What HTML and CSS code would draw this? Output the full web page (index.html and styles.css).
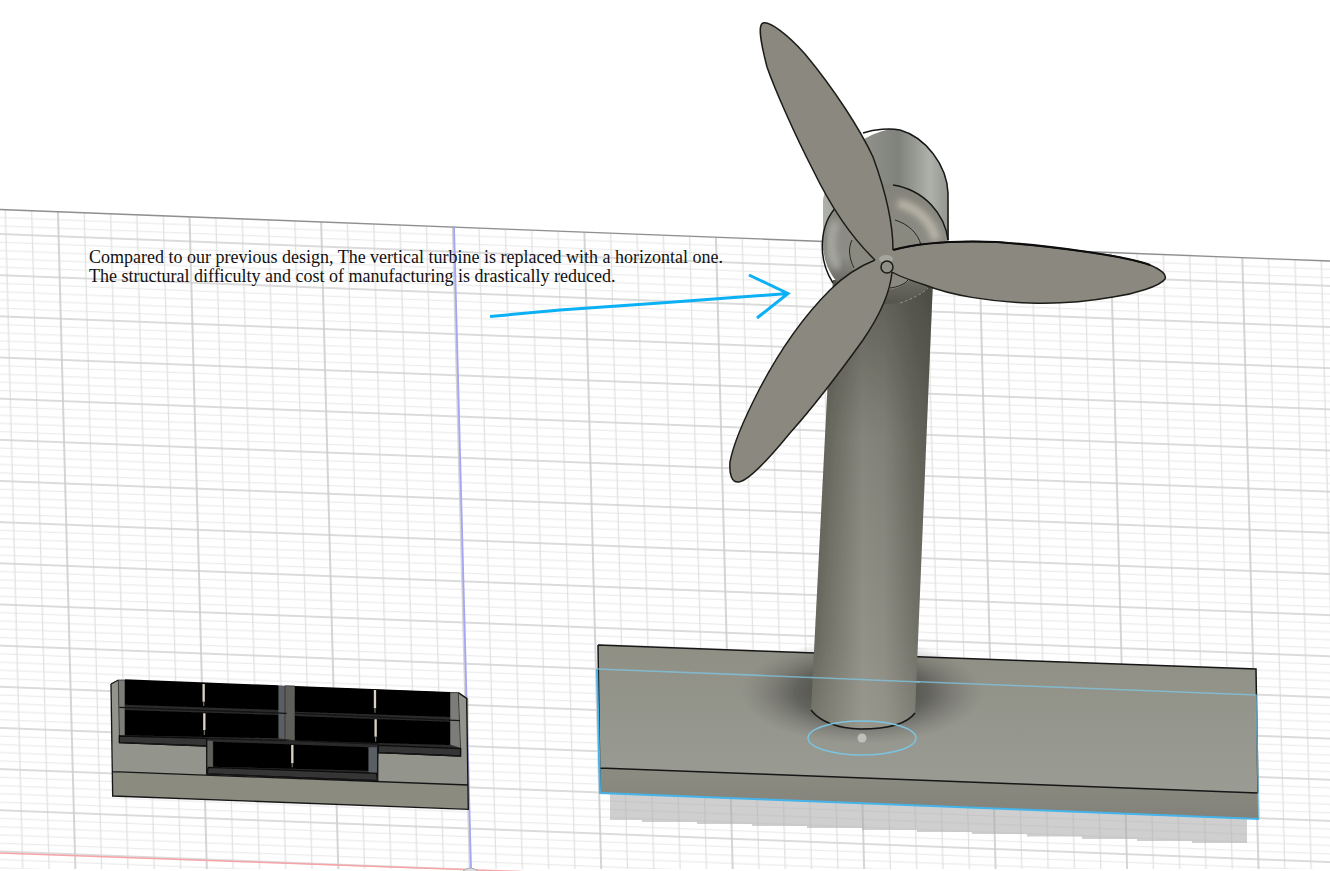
FILE: index.html
```html
<!DOCTYPE html>
<html lang="en">
<head>
    <meta charset="UTF-8">
    <meta name="viewport" content="width=device-width, initial-scale=1.0">
    <title>Wind Turbine Design</title>
    <link rel="stylesheet" href="styles.css">
</head>
<body>
    <div class="scene">
        <svg class="model" width="1330" height="871" viewBox="0 0 1330 871">
            <defs>
                <filter id="soft" x="-5%" y="-5%" width="110%" height="110%"><feGaussianBlur stdDeviation="0.5"/></filter>
                <filter id="softer" x="-50%" y="-50%" width="200%" height="200%"><feGaussianBlur stdDeviation="3"/></filter>
                <pattern id="grid" width="131.6" height="41.2" patternUnits="userSpaceOnUse" patternTransform="matrix(1 .039 .0265 1 58.6 236.3)">
                    <path class="grid-minor-h" d="M0 8.24H131.6M0 16.48H131.6M0 24.72H131.6M0 32.96H131.6"/>
                    <path class="grid-minor-v" d="M26.32 0V41.2M52.64 0V41.2M78.96 0V41.2M105.28 0V41.2"/>
                    <path class="grid-major-h" d="M0 0H131.6M0 41.2H131.6"/>
                    <path class="grid-major-v" d="M0 0V41.2M131.6 0V41.2"/>
                </pattern>
                <linearGradient id="poleShade" x1="0" x2="1" y1="0" y2="0">
                    <stop offset="0" stop-color="#5b5b52"/>
                    <stop offset=".12" stop-color="#6a6a60"/>
                    <stop offset=".42" stop-color="#8f8e85"/>
                    <stop offset=".6" stop-color="#8a8980"/>
                    <stop offset=".85" stop-color="#6b6b62"/>
                    <stop offset="1" stop-color="#5f5f56"/>
                </linearGradient>
                <linearGradient id="poleFade" x1="0" x2="0" y1="0" y2="1">
                    <stop offset="0" stop-color="#3f3f38" stop-opacity=".6"/>
                    <stop offset=".35" stop-color="#3f3f38" stop-opacity=".12"/>
                    <stop offset=".8" stop-color="#a9a9a0" stop-opacity=".12"/>
                    <stop offset="1" stop-color="#a9a9a0" stop-opacity=".35"/>
                </linearGradient>
                <linearGradient id="baseTop" x1="0" x2="0" y1="0" y2="1">
                    <stop offset="0" stop-color="#8f8f84"/>
                    <stop offset="1" stop-color="#9a9c94"/>
                </linearGradient>
                <linearGradient id="baseFront" x1="0" x2="0" y1="0" y2="1">
                    <stop offset="0" stop-color="#8c8c82"/>
                    <stop offset="1" stop-color="#82827a"/>
                </linearGradient>
                <radialGradient id="poleShadow">
                    <stop offset="0" stop-color="#333330" stop-opacity="1"/>
                    <stop offset=".55" stop-color="#4a4a46" stop-opacity=".65"/>
                    <stop offset="1" stop-color="#6a6a66" stop-opacity="0"/>
                </radialGradient>
                <linearGradient id="backCyl" x1="0" x2="1" y1="0" y2="0">
                    <stop offset="0" stop-color="#aeb0aa"/>
                    <stop offset=".4" stop-color="#8b8d86"/>
                    <stop offset=".6" stop-color="#80827c"/>
                    <stop offset=".85" stop-color="#aeb2ab"/>
                    <stop offset="1" stop-color="#92948d"/>
                </linearGradient>
                <linearGradient id="ringMetal" x1="0" x2="0" y1="0" y2="1">
                    <stop offset="0" stop-color="#84837a"/>
                    <stop offset=".6" stop-color="#8e8e87"/>
                    <stop offset=".85" stop-color="#66665e"/>
                    <stop offset="1" stop-color="#55554d"/>
                </linearGradient>
            </defs>

            <!-- ground grid -->
            <g filter="url(#soft)">
                <polygon points="0,209.5 1330,261 1330,869 0,869" fill="url(#grid)"/>
                <line class="horizon" x1="0" y1="209.5" x2="1330" y2="261"/>
                <line class="axis-x" x1="0" y1="853" x2="560" y2="873"/>
                <line class="axis-y" x1="454" y1="226" x2="471" y2="868"/>
                <path class="origin-mark" d="M463 871Q470 865 478 871"/>
            </g>

            <!-- solar panel block -->
            <g filter="url(#soft)" transform="translate(100 670) scale(.3333)">
                <polygon class="face-top" points="33,42 55,30 1075,68 1105,85 1105,345 38,305"/>
                <polygon class="face-front" points="38,305 1105,345 1105,418 38,378"/>
                <polygon class="panel-back" points="55,30 1075,68 1082,258 835,248 833,332 320,312 320,228 58,218"/>
                <path class="edge-thick" d="M33 42L55 30M33 42L38 378L1105 418L1100 85L1075 68M38 305L1105 345"/>
                <polygon class="panel-side" points="55,30 75,30 75,198 58,198"/>
                <polygon class="panel-side" points="1050,68 1075,68 1082,235 1050,225"/>
                <polygon class="panel-side-blue" points="535,46 555,47 555,208 535,205"/>
                <polygon class="panel-side-dark" points="555,47 585,48 585,212 555,208"/>
                <polygon class="panel-side-blue" points="805,232 835,232 835,320 805,305"/>
                <polygon class="panel-side-dark" points="320,210 340,212 340,295 320,305"/>
                <polygon class="cell" points="75,28 535,46 535,120 75,104"/>
                <polygon class="cell" points="585,48 1050,66 1050,141 585,125"/>
                <polygon class="cell" points="75,120 535,135 535,205 75,196"/>
                <polygon class="cell" points="585,138 1050,155 1050,225 585,212"/>
                <polygon class="cell" points="340,215 805,232 805,302 340,290"/>
                <polygon class="strip" points="58,198 320,205 320,228 58,218"/>
                <polygon class="strip" points="835,226 1082,236 1082,258 835,248"/>
                <polygon class="strip" points="325,292 830,310 833,332 320,312"/>
                <path class="edge-thick" d="M58 112L560 130M585 130L1080 152M320 205L560 212M585 212L835 222M320 228V312L833 332V232M58 218L320 228M835 248L1082 258"/>
                <path class="pin" d="M311 42V95M313 130V180M825 60V115M827 148V200M577 225V280"/>
                <path class="pin-end" d="M311 95V108M313 180V195M825 115V128M827 200V215M577 280V292"/>
            </g>

            <!-- base plate -->
            <path class="shadow" filter="url(#soft)" d="M610 790L1247 815V843H1192V841H1137V839H1082V836.500H1027V834H972V832H917V830H862V828H807V826H752V824H697V822H642V820H610Z"/>
            <g filter="url(#soft)">
                <polygon points="598,645 1256,669 1258,793 600,768" fill="url(#baseTop)"/>
                <ellipse cx="862" cy="692" rx="122" ry="52" fill="url(#poleShadow)"/>
                <polygon points="600,768 1258,793 1259,819 600,793" fill="url(#baseFront)"/>
                <path class="edge" d="M598 645L1256 669L1258 793M598 645L600 793M600 768L1258 793"/>
                <path class="sel-faint" d="M597 669L1256 695L1259 819"/>
                <path class="sel-strong" d="M597 669L600 793L1259 819"/>
            </g>

            <!-- tower -->
            <g filter="url(#soft)">
                <path d="M833 280L933 280L915 713Q905 729 861 729Q818 728 811 710Z" fill="url(#poleShade)"/>
                <path d="M833 280L933 280L915 713Q905 729 861 729Q818 728 811 710Z" fill="url(#poleFade)"/>
                <path class="edge" d="M811 710Q825 728 861 729Q903 729 915 713"/>
                <path class="sel-faint" d="M812 677.500L920 682"/>
                <ellipse class="sel-ring" cx="862" cy="738" rx="54" ry="17"/>
                <ellipse class="dot" cx="862" cy="738" rx="4.500" ry="4.500"/>
            </g>

            <!-- nacelle and hub -->
            <g filter="url(#soft)">
                <path d="M823 200C826 185 840 140 890 129C925 130 948 165 948 193L949 245L823 250Z" fill="url(#backCyl)"/>
                <path class="edge" d="M863 133C875 129 890 128 900 130C925 137 947 165 948 193V240"/>
                <ellipse cx="885" cy="244" rx="62" ry="60" fill="url(#ringMetal)"/>
                <path class="ring-glow" filter="url(#softer)" d="M898 203C918 208 932 222 936 240"/>
                <path class="ring-glow-left" filter="url(#softer)" d="M836 222C829 238 830 255 838 268"/>
                <circle class="hub-inner" cx="885" cy="255" r="35"/>
                <path class="edge" d="M833 283C818 260 818 225 838 205M893 185C925 190 945 215 948 240"/>
                <path class="edge-thin" d="M895 220C908 224 918 233 921 245M854 268C849 258 848 248 852 240M890 288C898 287 905 284 908 280"/>
                <path class="dash" d="M900 303C912 299 922 294 928 288"/>
            </g>

            <!-- blades -->
            <g filter="url(#soft)">
                <path class="blade" d="M893 250C893 225 888 198 873 157C861 131 835 90 805 54C788 35 770 21 763 23C758 25 760 40 767 67C775 90 795 135 813 170C830 205 852 238 875 260"/>
                <path class="blade" d="M893 250C915 244 945 240 997 242C1060 247 1125 256 1150 265C1162 270 1167 275 1165 279C1160 286 1135 294 1113 297C1085 302 1060 304 1030 303C990 302 950 295 925 285C910 280 898 276 892 272"/>
                <path class="blade" d="M875 260C860 266 845 275 830 290C805 315 780 350 760 388C745 417 733 445 730 462C729 475 732 483 739 482C750 480 772 455 790 433C815 405 845 365 863 340C878 318 890 295 892 272"/>
                <path class="blade-heavy" d="M893 250C915 244 945 240 997 242C1060 247 1125 256 1150 265"/>
                <polygon class="blade-core" points="875,260 893,250 898,262 892,272 885,262"/>
                <ellipse class="hub-halo" cx="886" cy="259" rx="7" ry="4"/>
                <circle class="hub-cap" cx="887" cy="267" r="6"/>
            </g>

            <!-- sketch arrow -->
            <path class="arrow" d="M490 316.500L560 310L660 303L788 293.500M749 275L788 293.500L757 318"/>
        </svg>

        <p class="note">Compared to our previous design, The vertical turbine is replaced with a horizontal one.<br>The structural difficulty and cost of manufacturing is drastically reduced.</p>
    </div>
</body>
</html>
```

FILE: styles.css
```css
html, body {
    margin: 0;
    padding: 0;
    background-color: white;
}
.scene {
    position: relative;
    width: 1330px;
    height: 871px;
    overflow: hidden;
}
.model {
    position: absolute;
    left: 0;
    top: 0;
}
.note {
    position: absolute;
    left: 89px;
    top: 248px;
    margin: 0;
    font-family: "Liberation Serif", "Times New Roman", serif;
    font-size: 18px;
    line-height: 19px;
    color: #111;
    white-space: nowrap;
}

/* grid */
.grid-minor-h { stroke: #ececec; stroke-width: 1.2; fill: none; }
.grid-minor-v { stroke: #e2e2e2; stroke-width: 1.3; fill: none; }
.grid-major-h { stroke: #d0d0d0; stroke-width: 1.4; fill: none; }
.grid-major-v { stroke: #cbcbcb; stroke-width: 1.6; fill: none; }
.horizon { stroke: #8f8f8f; stroke-width: 1.4; }
.axis-x { stroke: #f7a3a8; stroke-width: 1.6; }
.axis-y { stroke: #a5a5f5; stroke-width: 1.8; }
.origin-mark { stroke: #aaa; stroke-width: 1; fill: #ddd; }

/* solar panel */
.face-top { fill: #93958c; }
.face-front { fill: #8b8b80; }
.panel-back { fill: #2b2b2b; }
.edge-thick { stroke: #141414; stroke-width: 4; fill: none; }
.panel-side { fill: #7b7c78; stroke: #222; stroke-width: 2; }
.panel-side-blue { fill: #5a5e66; }
.panel-side-dark { fill: #5f5f5a; stroke: #222; stroke-width: 2; }
.cell { fill: #020202; }
.strip { fill: #363636; stroke: #0c0c0c; stroke-width: 4; }
.pin { stroke: #d9d2c2; stroke-width: 7; }
.pin-end { stroke: #66645e; stroke-width: 4; }

/* base plate */
.shadow { fill: #a8a8a8; fill-opacity: .55; }
.edge { stroke: #161616; stroke-width: 1.5; fill: none; }
.edge-thin { stroke: #26261f; stroke-width: 1; fill: none; }
.sel-faint { stroke: #7fc4e2; stroke-width: 1.6; fill: none; stroke-opacity: .75; }
.sel-strong { stroke: #45b4ea; stroke-width: 2; fill: none; }
.sel-ring { stroke: #7cc3e0; stroke-width: 1.5; fill: none; }
.dot { fill: #c0c0bb; }

/* hub */
.ring-glow { stroke: #bab5a8; stroke-width: 9; fill: none; }
.ring-glow-left { stroke: #a9a9a4; stroke-width: 8; fill: none; }
.hub-inner { fill: #8a897f; stroke: none; }
.dash { stroke: #8f8f85; stroke-width: 1; fill: none; stroke-dasharray: 3 2; }
.blade { fill: #8b897f; stroke: #1b1b18; stroke-width: 1.5; }
.blade-heavy { fill: none; stroke: #0c0c0a; stroke-width: 2.2; }
.blade-core { fill: #8b897f; }
.hub-halo { fill: #a5a59c; }
.hub-cap { fill: #8f8f86; stroke: #1b1b18; stroke-width: 1.5; }

.arrow { stroke: #0bb0f5; stroke-width: 3; fill: none; }
```
